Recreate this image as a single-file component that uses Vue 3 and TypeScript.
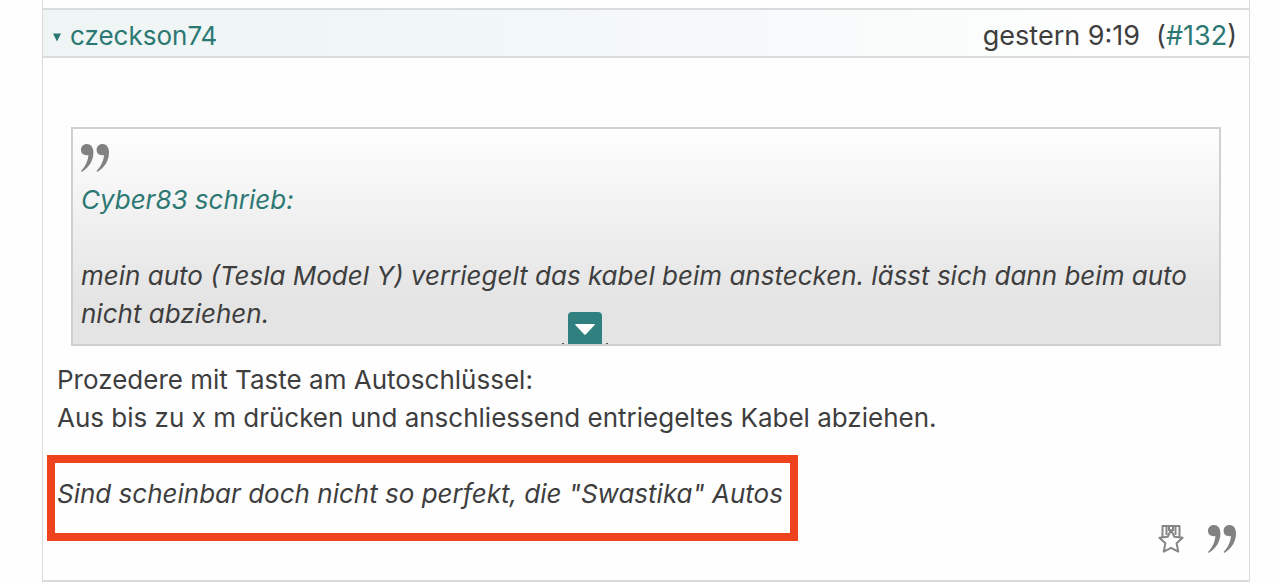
<script setup lang="ts">
import { ref } from 'vue'

interface Post {
  author: string
  time: string
  number: string
  quotedAuthor: string
  quotedText: string
  lines: string[]
  highlight: string
}

const post: Post = {
  author: 'czeckson74',
  time: 'gestern 9:19',
  number: '#132',
  quotedAuthor: 'Cyber83',
  quotedText:
    'mein auto (Tesla Model Y) verriegelt das kabel beim anstecken. lässt sich dann beim auto nicht abziehen.',
  lines: [
    'Prozedere mit Taste am Autoschlüssel:',
    'Aus bis zu x m drücken und anschliessend entriegeltes Kabel abziehen.',
  ],
  highlight: 'Sind scheinbar doch nicht so perfekt, die "Swastika" Autos',
}

const expanded = ref(false)
</script>

<template>
  <main class="thread">
    <div class="previous"></div>
    <article class="post">
      <header class="head">
        <a class="author" href="#user">
          <svg class="caret" viewBox="0 0 8 9" aria-hidden="true"><path d="M0 0.5H8L4 8.5Z" /></svg>
          <span>{{ post.author }}</span>
        </a>
        <div class="meta">
          <time>{{ post.time }}</time>
          <span>(<a href="#132">{{ post.number }}</a>)</span>
        </div>
      </header>

      <div class="content">
        <blockquote class="quote">
          <svg class="marks" viewBox="0 0 28 28" aria-hidden="true">
            <path d="M0 5.8C0 2.5 2.5 0 5.8 0C9.8 0 12.4 3.3 12.4 8.4C12.4 16.5 8 23.5 0.5 28L0 27C4.2 22.5 6.8 17.7 7.4 11C3 12 0 9.6 0 5.8Z" />
            <path d="M15.6 5.8C15.6 2.5 18.1 0 21.4 0C25.4 0 28 3.3 28 8.4C28 16.5 23.6 23.5 16.1 28L15.6 27C19.8 22.5 22.4 17.7 23 11C18.6 12 15.6 9.6 15.6 5.8Z" />
          </svg>
          <a class="source" href="#quoted">{{ post.quotedAuthor }} schrieb:</a>
          <p class="quoted">{{ post.quotedText }}</p>
          <div class="more">
            <i class="dot"></i>
            <button type="button" aria-label="Zitat aufklappen" :aria-expanded="expanded" @click="expanded = !expanded">
              <svg viewBox="0 0 20 11" aria-hidden="true"><path d="M0.5 0H19.5Q20 0.3 19.6 0.9L10.7 10.5Q10 11 9.3 10.5L0.4 0.9Q0 0.3 0.5 0Z" /></svg>
            </button>
            <i class="dot"></i>
          </div>
        </blockquote>

        <p v-for="line in post.lines" :key="line" class="line">{{ line }}</p>
        <p class="highlight">{{ post.highlight }}</p>
      </div>

      <footer class="actions">
        <button type="button" aria-label="Auszeichnen">
          <svg class="medal" viewBox="0 0 26 29" aria-hidden="true">
            <path d="M4.5 13V2H21.5V13M8.5 11V2M17.5 11V2M11 7V2M15 7V2" />
            <path class="star" d="M13 6L16.3 12.8L24.6 13.8L18.6 19.2L20.3 27.6L13 23.8L5.7 27.6L7.4 19.2L1.4 13.8L9.7 12.8Z" />
          </svg>
        </button>
        <button type="button" aria-label="Zitieren">
          <svg class="marks" viewBox="0 0 28 28" aria-hidden="true">
            <path d="M0 5.8C0 2.5 2.5 0 5.8 0C9.8 0 12.4 3.3 12.4 8.4C12.4 16.5 8 23.5 0.5 28L0 27C4.2 22.5 6.8 17.7 7.4 11C3 12 0 9.6 0 5.8Z" />
            <path d="M15.6 5.8C15.6 2.5 18.1 0 21.4 0C25.4 0 28 3.3 28 8.4C28 16.5 23.6 23.5 16.1 28L15.6 27C19.8 22.5 22.4 17.7 23 11C18.6 12 15.6 9.6 15.6 5.8Z" />
          </svg>
        </button>
      </footer>
    </article>
  </main>
</template>

<style>
body {
  margin: 0;
  background: #fefefe;
}
</style>

<style scoped>
.thread {
  padding: 0 30px 0 42px;
  font-family: Inter, "Liberation Sans", sans-serif;
  font-size: 26px;
  line-height: 38px;
  color: #3e3e3e;
}
.previous {
  height: 8px;
  border: solid #dadcdc;
  border-width: 0 1px;
}
.post {
  border: 1px solid #dadcdc;
  border-top-width: 2px;
  border-bottom-width: 2px;
}
.head {
  display: flex;
  justify-content: space-between;
  align-items: center;
  padding: 7px 12px 1px 10px;
  border-bottom: 2px solid #dadcdc;
  background: linear-gradient(to right, #eef5f4, #f2f7f8 40%, #fefefe 90%);
}
a {
  color: #2c7873;
  text-decoration: none;
}
.author {
  display: flex;
  align-items: center;
  gap: 9px;
}
.caret {
  width: 8px;
  height: 9px;
  margin-top: 2px;
  fill: currentColor;
}
.meta {
  display: flex;
  gap: 16px;
  font-size: 27px;
}
.content {
  padding: 69px 14px 0;
}
.quote {
  position: relative;
  margin: 0 14px 15px;
  padding: 15px 8px 11px;
  border: 2px solid #d0d0d0;
  background: linear-gradient(#fefefe, #e4e4e4 80%);
  font-style: italic;
}
.marks {
  display: block;
  width: 28px;
  height: 28px;
  fill: #818181;
}
.source {
  display: block;
  margin: 9px 0 38px;
}
.quoted,
.line {
  margin: 0;
}
.more {
  position: absolute;
  left: 489px;
  bottom: 0;
  display: flex;
  align-items: flex-end;
  gap: 4px;
}
.more button {
  display: flex;
  align-items: center;
  justify-content: center;
  width: 34px;
  height: 32px;
  padding: 2px 0 0;
  border: 0;
  border-radius: 4px 4px 0 0;
  background: #30807f;
}
.more svg {
  width: 20px;
  height: 11px;
  fill: #fff;
}
.dot {
  width: 2px;
  height: 1px;
  background: #555;
}
.highlight {
  width: fit-content;
  margin: 18px 0 0 -10px;
  padding: 12px 7px 20px 2px;
  border: 8px solid #ee431d;
  font-style: italic;
}
.actions {
  display: flex;
  justify-content: flex-end;
  align-items: center;
  gap: 24px;
  margin-top: -17px;
  padding: 0 13px 27px;
}
.actions button {
  padding: 0;
  border: 0;
  background: none;
}
.medal {
  display: block;
  width: 26px;
  height: 29px;
  fill: none;
  stroke: #858585;
  stroke-width: 2;
  stroke-linejoin: round;
}
.star {
  fill: #fefefe;
}
</style>
